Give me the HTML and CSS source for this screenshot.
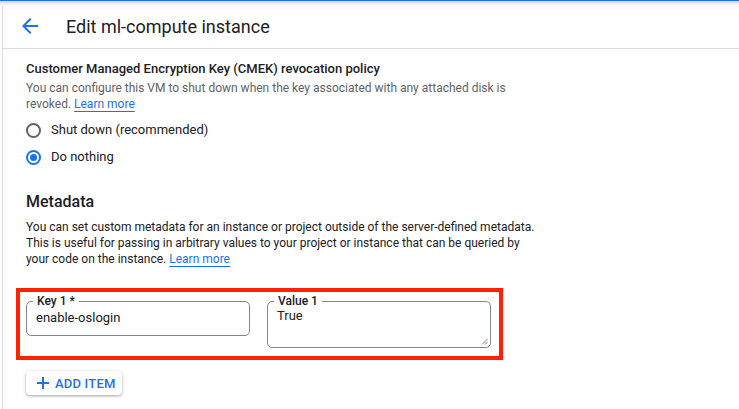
FILE: index.html
```html
<!DOCTYPE html>
<html>
<head>
<meta charset="utf-8">
<link rel="stylesheet" href="styles.css">
</head>
<body>
<div class="topbar"></div>
<div class="page">
  <header class="header">
    <svg class="back" width="24" height="24" viewBox="0 0 24 24"><path d="M20 11H7.83l5.59-5.59L12 4l-8 8 8 8 1.41-1.41L7.83 13H20v-2z" fill="#1a73e8"/></svg>
    <h1 class="title">Edit ml-compute instance</h1>
  </header>
  <main class="content">
    <section class="cmek">
      <h2 class="sub">Customer Managed Encryption Key (CMEK) revocation policy</h2>
      <p class="hint">You can configure this VM to shut down when the key associated with any attached disk is revoked. <a class="link">Learn more</a></p>
      <div class="radios">
        <label class="radio"><span class="dot"></span>Shut down (recommended)</label>
        <label class="radio"><span class="dot on"></span>Do nothing</label>
      </div>
    </section>
    <section class="meta">
      <h2 class="heading">Metadata</h2>
      <p class="desc">You can set custom metadata for an instance or project outside of the server-defined metadata. This is useful for passing in arbitrary values to your project or instance that can be queried by your code on the instance. <a class="link">Learn more</a></p>
      <div class="highlight">
        <div class="field key">
          <span class="flabel">Key 1 *</span>
          <span class="fval">enable-oslogin</span>
        </div>
        <div class="field value">
          <span class="flabel">Value 1</span>
          <span class="fval">True</span>
          <svg class="grip" width="7" height="7" viewBox="0 0 7 7"><path d="M6.5 1L1 6.5M6.5 4L4 6.5" stroke="#5f6368" stroke-width="0.8"/></svg>
        </div>
      </div>
      <button class="add"><svg width="14" height="14" viewBox="0 0 14 14"><path d="M7 1v12M1 7h12" stroke="#1a73e8" stroke-width="2"/></svg>ADD ITEM</button>
    </section>
  </main>
</div>
</body>
</html>
```
FILE: styles.css
```css
* { box-sizing: border-box; }
html, body { margin: 0; padding: 0; background: #fff; }
body {
  font-family: Roboto, "Liberation Sans", sans-serif;
  color: #202124;
  width: 739px;
  height: 409px;
  overflow: hidden;
  position: relative;
}
.topbar {
  height: 6px;
  border-top: 1px solid #1a73e8;
  background: linear-gradient(#d6d6d6, #fff);
}
.page {
  margin-left: 2px;
  border-left: 1px solid #dadce0;
  height: 403px;
}
.header {
  height: 43px;
  border-bottom: 1px solid #dadce0;
  display: flex;
  align-items: center;
  padding-left: 15px;
  padding-bottom: 2px;
}
.back { flex: none; }
.title {
  margin: 0 0 0 24px;
  font-size: 18px;
  font-weight: 400;
  color: #202124;
}
.content {
  padding: 11px 0 0 23px;
}
.sub {
  margin: 0;
  font-size: 13px;
  font-weight: 500;
  line-height: 18px;
}
.hint {
  margin: 2px 0 0;
  width: 490px;
  font-size: 12px;
  line-height: 16px;
  color: #5f6368;
}
.link {
  color: #1a73e8;
  text-decoration: underline;
  text-underline-offset: 3px;
}
.radios {
  margin-top: 9px;
  display: flex;
  flex-direction: column;
  gap: 9px;
}
.radio {
  display: flex;
  align-items: center;
  font-size: 13px;
  line-height: 18px;
  gap: 10px;
}
.dot {
  width: 15px;
  height: 15px;
  border: 2px solid #5f6368;
  border-radius: 50%;
  display: flex;
  align-items: center;
  justify-content: center;
}
.dot.on { border-color: #1a73e8; }
.dot.on::after {
  content: "";
  width: 7px;
  height: 7px;
  border-radius: 50%;
  background: #1a73e8;
}
.meta { margin-top: 25px; }
.heading {
  margin: 0;
  font-size: 16px;
  font-weight: 500;
  line-height: 22px;
}
.desc {
  margin: 6px 0 0;
  width: 512px;
  font-size: 12px;
  line-height: 16px;
  color: #202124;
}
.highlight {
  margin: 21px 0 0 -10px;
  width: 487px;
  height: 72px;
  border: 4px solid #ff2200;
  display: flex;
  align-items: flex-start;
  padding: 9px 0 0 6px;
  gap: 17px;
}
.field {
  position: relative;
  width: 224px;
  border: 1px solid #80868b;
  border-radius: 5px;
  padding: 7px 9px 0;
  font-size: 13px;
}
.field.key { height: 35px; }
.field.value { height: 47px; padding-top: 5px; }
.flabel {
  position: absolute;
  top: -8px;
  left: 6px;
  background: #fff;
  padding: 0 4px;
  font-size: 12px;
  font-weight: 500;
  line-height: 14px;
}
.fval { display: block; line-height: 18px; }
.grip { position: absolute; right: 2px; bottom: 2px; }
.add {
  margin-top: 11px;
  display: flex;
  align-items: center;
  gap: 5px;
  height: 24px;
  width: 96px;
  padding: 0 0 0 10px;
  border: none;
  border-radius: 4px;
  background: #fff;
  box-shadow: 0 1px 2px rgba(60,64,67,0.3), 0 1px 3px 1px rgba(60,64,67,0.15);
  color: #1a73e8;
  font-family: Roboto, "Liberation Sans", sans-serif;
  font-size: 13px;
  font-weight: 500;
  letter-spacing: 0.2px;
}
```
